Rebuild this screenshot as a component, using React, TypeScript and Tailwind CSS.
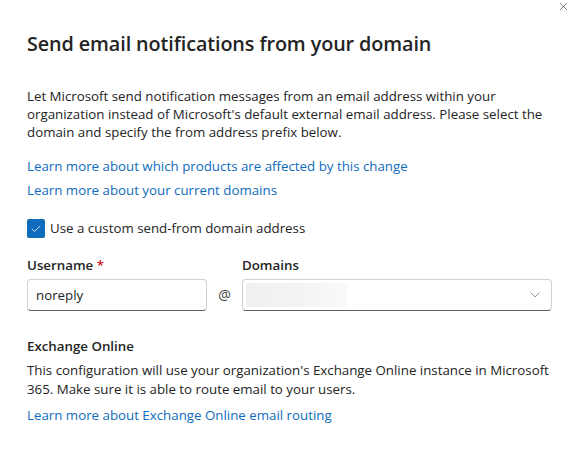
import React, { useState } from 'react';
import { X, Check, ChevronDown } from 'lucide-react';

const linkCls = 'text-[#0f6cbd] hover:underline cursor-pointer';

export default function App() {
  const [custom, setCustom] = useState(true);
  const [username, setUsername] = useState('noreply');

  return (
    <div className="relative w-[585px] h-[451px] bg-white text-[#242424] font-['Open_Sans',sans-serif] text-[13.3px] overflow-hidden">
      {/* Close */}
      <button className="absolute right-[15px] top-0 text-[#424242]">
        <X className="w-[13px] h-[13px]" strokeWidth={1.25} />
      </button>

      <div className="pl-[27px] pr-[33px] pt-[31px]">
        <h1 className="text-[19.8px] leading-[26px] font-semibold tracking-[-0.1px]">
          Send email notifications from your domain
        </h1>

        <p className="mt-[30px] leading-[18px]">
          Let Microsoft send notification messages from an email address within your organization instead of
          Microsoft's default external email address. Please select the domain and specify the from address prefix
          below.
        </p>

        <div className="mt-[16px] flex flex-col gap-[6px] leading-[18px]">
          <a className={linkCls}>Learn more about which products are affected by this change</a>
          <a className={linkCls}>Learn more about your current domains</a>
        </div>

        {/* Checkbox */}
        <label className="mt-[20px] flex items-center gap-[5px] cursor-pointer">
          <span
            onClick={() => setCustom(!custom)}
            className={`w-[18px] h-[19px] rounded-[2px] flex items-center justify-center ${
              custom ? 'bg-[#0f6cbd]' : 'border border-[#616161] bg-white'
            }`}
          >
            {custom && <Check className="w-[12px] h-[12px] text-white" strokeWidth={1.5} />}
          </span>
          <span>Use a custom send-from domain address</span>
        </label>

        {/* Fields */}
        <div className="mt-[17px] flex items-end">
          <div className="flex flex-col">
            <span className="font-semibold leading-[18px] mb-[5px]">
              Username <span className="text-[#c50f1f]">*</span>
            </span>
            <input
              value={username}
              onChange={(e) => setUsername(e.target.value)}
              className="w-[180px] h-[32px] px-[8px] rounded-[4px] border border-[#d1d1d1] border-b-[#616161] outline-none text-[13.3px] text-[#242424]"
            />
          </div>
          <span className="w-[38px] h-[32px] flex items-center justify-center text-[#424242] text-[14px]">@</span>
          <div className="flex flex-col">
            <span className="font-semibold leading-[18px] mb-[5px]">Domains</span>
            <div className="w-[310px] h-[32px] rounded-[4px] border border-[#d1d1d1] border-b-[#616161] flex items-center pl-[3px] pr-[8px]">
              <div className="w-[101px] h-[24px] bg-gradient-to-r from-[#f0f0f0] via-[#f3f3f3] to-[#fafafa]" />
              <div className="flex-1" />
              <ChevronDown className="w-[16px] h-[16px] text-[#616161]" strokeWidth={1} />
            </div>
          </div>
        </div>

        {/* Exchange */}
        <h2 className="mt-[26px] font-semibold leading-[18px]">Exchange Online</h2>
        <p className="mt-[6px] leading-[19px]">
          This configuration will use your organization's Exchange Online instance in Microsoft 365. Make sure it is
          able to route email to your users.
        </p>
        <a className={`block mt-[7px] leading-[18px] ${linkCls}`}>
          Learn more about Exchange Online email routing
        </a>
      </div>
    </div>
  );
}
